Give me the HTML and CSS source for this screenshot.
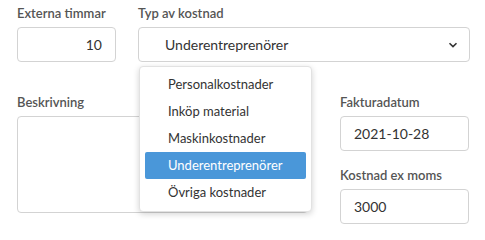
FILE: index.html
```html
<!DOCTYPE html>
<html lang="sv">
<head>
<meta charset="utf-8">
<link rel="stylesheet" href="styles.css">
</head>
<body>
<div class="page">
  <div class="row row-top">
    <div class="field field-hours">
      <div class="label">Externa timmar</div>
      <div class="box box-right">10</div>
    </div>
    <div class="field field-type">
      <div class="label">Typ av kostnad</div>
      <div class="box select">
        <span class="select-text">Underentreprenörer</span>
        <svg class="chevron" width="10" height="6" viewBox="0 0 10 6"><path d="M1.5 1.2 L5 4.6 L8.5 1.2" fill="none" stroke="#333" stroke-width="1.6"/></svg>
      </div>
    </div>
  </div>
  <div class="row row-bottom">
    <div class="field field-desc">
      <div class="label">Beskrivning</div>
      <div class="box textarea"></div>
    </div>
    <div class="field field-side">
      <div class="label">Fakturadatum</div>
      <div class="box">2021-10-28</div>
      <div class="label label-gap">Kostnad ex moms</div>
      <div class="box">3000</div>
    </div>
  </div>
  <ul class="menu">
    <li class="item">Personalkostnader</li>
    <li class="item">Inköp material</li>
    <li class="item">Maskinkostnader</li>
    <li class="item active">Underentreprenörer</li>
    <li class="item">Övriga kostnader</li>
  </ul>
</div>
</body>
</html>
```

FILE: styles.css
```css
html, body {
  margin: 0;
  padding: 0;
  background: #fff;
}
body {
  font-family: "Lato", "Noto Sans", sans-serif;
  color: #333;
}
.page {
  position: relative;
  width: 485px;
  height: 240px;
  padding: 5px 0 0 17px;
  box-sizing: border-box;
}
.row {
  display: flex;
}
.row-top {
  gap: 22px;
}
.row-bottom {
  gap: 32px;
  margin-top: 32px;
}
.label {
  font-size: 13px;
  line-height: 16px;
  font-weight: 600;
  color: #555;
  margin-bottom: 6px;
}
.label-gap {
  margin-top: 16px;
}
.box {
  height: 35px;
  box-sizing: border-box;
  border: 1px solid #d3d3d3;
  border-radius: 4px;
  font-size: 14px;
  line-height: 33px;
  padding: 0 13px;
  color: #333;
}
.box-right {
  text-align: right;
}
.field-hours {
  width: 99px;
}
.field-type {
  width: 332px;
}
.select {
  display: flex;
  align-items: center;
  justify-content: space-between;
  padding: 0 11px 0 26px;
}
.chevron {
  display: block;
}
.field-desc {
  width: 291px;
}
.textarea {
  height: 97px;
}
.field-side {
  width: 129px;
}
.menu {
  position: absolute;
  left: 139px;
  top: 66px;
  width: 173px;
  height: 146px;
  box-sizing: border-box;
  margin: 0;
  padding: 4px 5px 0 5px;
  list-style: none;
  background: #fff;
  border: 1px solid #e2e2e2;
  border-radius: 4px;
  box-shadow: 0 2px 6px rgba(0, 0, 0, 0.18);
}
.item {
  height: 27px;
  line-height: 27px;
  font-size: 13px;
  padding-left: 23px;
  color: #333;
  border-radius: 2px;
}
.item.active {
  background: #4a97d9;
  color: #fff;
}
```
